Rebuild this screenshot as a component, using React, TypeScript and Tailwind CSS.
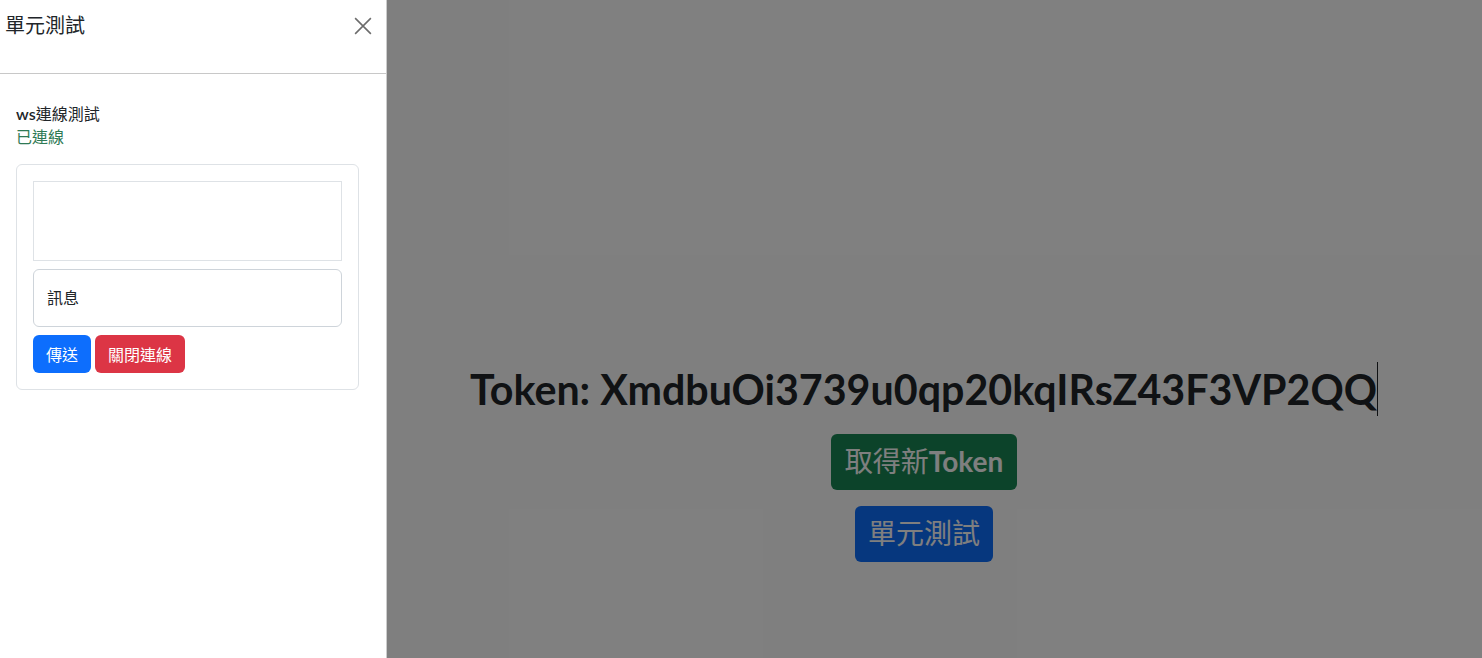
import React from "react";

const cjk = '"Noto Sans CJK TC", "Noto Sans CJK SC", sans-serif';
const latin = 'Lato, "Noto Sans CJK TC", sans-serif';

export default function App() {
  return (
    <div className="relative w-[1482px] h-[658px] overflow-hidden bg-white" style={{ fontFamily: latin }}>
      {/* main page */}
      <div className="flex flex-col items-center pl-[366px] pt-[361px]">
        <div className="flex items-center h-[56px]">
          <h1 className="text-[41.2px] font-bold text-[#212529] leading-[56px]">Token: XmdbuOi3739u0qp20kqIRsZ43F3VP2QQ</h1>
          <span className="w-px h-[54px] bg-[#212529]" />
        </div>
        <button className="mt-[17px] h-[56px] px-[14px] pb-[4px] rounded-[6px] bg-[#198754] text-white text-[28px] leading-none">
          <span style={{ fontFamily: cjk }}>取得新</span><span className="font-bold">Token</span>
        </button>
        <button className="mt-[16px] h-[56px] px-[13px] pb-[4px] rounded-[6px] bg-[#0d6efd] text-white text-[28px] leading-none" style={{ fontFamily: cjk }}>
          單元測試
        </button>
      </div>

      {/* backdrop */}
      <div className="absolute inset-0 bg-black/50" />

      {/* offcanvas */}
      <div className="absolute left-0 top-0 bottom-0 w-[387px] bg-white border-r border-black/20 flex flex-col" style={{ fontFamily: cjk }}>
        <div className="h-[74px] border-b border-[#c8c8c8] flex items-start justify-between pl-[5px] pr-[14px] pt-[10px]">
          <h5 className="text-[20px] leading-[30px] text-[#212529]">單元測試</h5>
          <svg width="18" height="18" viewBox="0 0 16 16" className="mt-[7px]" fill="none" stroke="#6c6c6c" strokeWidth="1.4">
            <path d="M1 1L15 15M15 1L1 15" />
          </svg>
        </div>
        <div className="pl-[16px] pt-[28px] pr-[27px]">
          <div className="text-[16px] leading-[23px] text-[#212529]"><span style={{ fontFamily: latin }} className="font-semibold">ws</span>連線測試</div>
          <div className="text-[16px] leading-[23px] text-[#2f7a55]">已連線</div>
          <div className="mt-[16px] border border-[#dee2e6] rounded-[6px] p-[16px] flex flex-col">
            <div className="h-[80px] border border-[#dee2e6]" />
            <div className="mt-[8px] h-[58px] border border-[#ced4da] rounded-[6px] flex items-start pt-[15px] px-[13px] text-[16px] leading-[24px] text-[#212529]">
              訊息
            </div>
            <div className="mt-[8px] flex gap-[4px]">
              <button className="h-[38px] px-[13px] rounded-[6px] bg-[#0d6efd] text-white text-[16px]">傳送</button>
              <button className="h-[38px] px-[13px] rounded-[6px] bg-[#dc3545] text-white text-[16px]">關閉連線</button>
            </div>
          </div>
        </div>
      </div>
    </div>
  );
}
